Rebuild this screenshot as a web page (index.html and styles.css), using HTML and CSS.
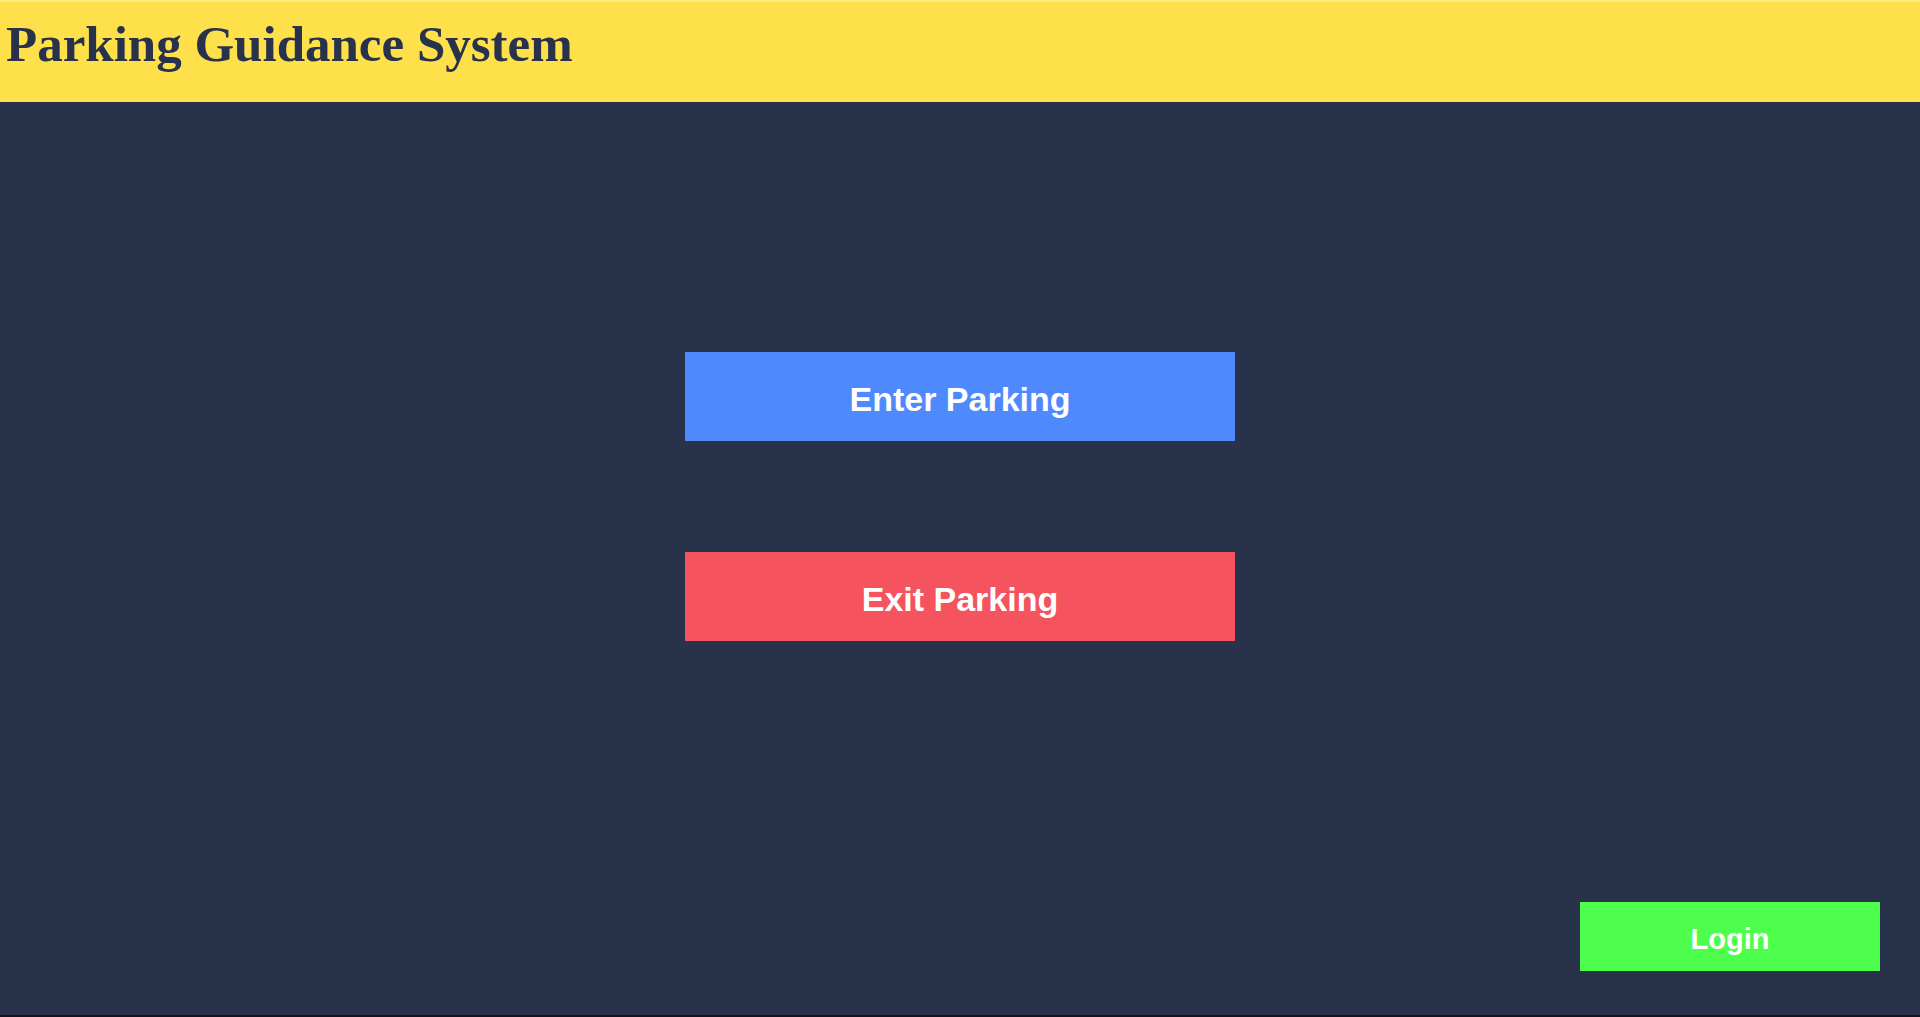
FILE: index.html
```html
<!DOCTYPE html>
<html lang="en">
<head>
<meta charset="utf-8">
<title>Parking Guidance System</title>
<link rel="stylesheet" href="styles.css">
</head>
<body>
<div class="page">
  <header class="header">
    <h1 class="title">Parking Guidance System</h1>
  </header>
  <main class="main">
    <div class="actions">
      <button class="btn btn-enter">Enter Parking</button>
      <button class="btn btn-exit">Exit Parking</button>
    </div>
    <button class="btn btn-login">Login</button>
  </main>
  <div class="bottom-line"></div>
</div>
</body>
</html>
```
FILE: styles.css
```css
html, body {
  margin: 0;
  padding: 0;
  height: 100%;
}
body {
  background: #28324a;
  font-family: "Liberation Sans", Arial, sans-serif;
}
.page {
  height: 100vh;
  display: flex;
  flex-direction: column;
}
.header {
  height: 100px;
  border-top: 2px solid #fdea80;
  background: #fde04a;
  display: flex;
  align-items: flex-start;
  flex-shrink: 0;
}
.title {
  margin: 0;
  padding: 12px 0 0 6px;
  font-family: "Liberation Serif", "Times New Roman", serif;
  font-weight: bold;
  font-size: 51px;
  line-height: 60px;
  color: #28324a;
}
.main {
  flex: 1;
  display: flex;
  flex-direction: column;
  padding: 250px 40px 44px 0;
}
.actions {
  display: flex;
  flex-direction: column;
  align-items: center;
  gap: 111px;
  padding-left: 40px;
}
.btn {
  border: none;
  color: #ffffff;
  font-family: "Liberation Sans", Arial, sans-serif;
  font-weight: bold;
  cursor: pointer;
  padding: 5px 0 0 0;
  box-sizing: border-box;
}
.btn-enter, .btn-exit {
  width: 550px;
  height: 89px;
  font-size: 34px;
}
.btn-enter {
  background: #4f89fe;
}
.btn-exit {
  background: #f5535d;
}
.btn-login {
  margin-top: auto;
  align-self: flex-end;
  width: 300px;
  height: 69px;
  font-size: 29px;
  background: #4dfe4d;
}
.bottom-line {
  height: 2px;
  background: #111418;
  flex-shrink: 0;
}
```
